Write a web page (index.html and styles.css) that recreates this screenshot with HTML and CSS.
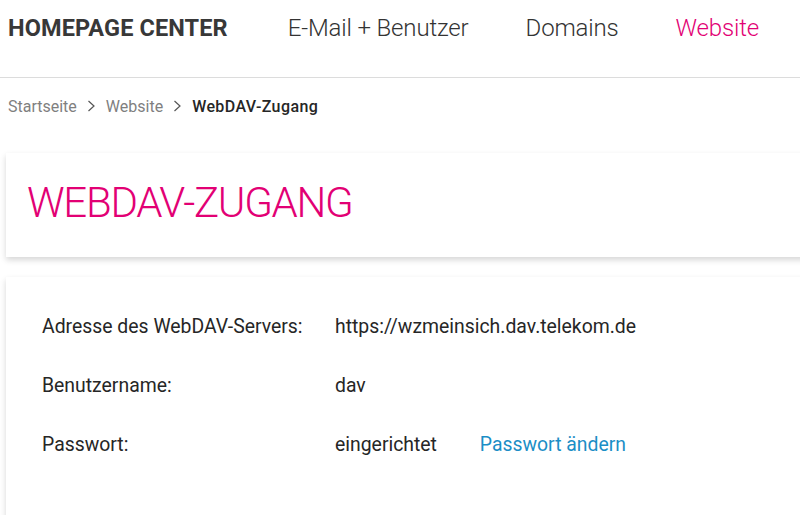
FILE: index.html
```html
<!DOCTYPE html>
<html lang="de">
<head>
<meta charset="utf-8">
<title>WebDAV-Zugang</title>
<link rel="stylesheet" href="styles.css">
</head>
<body>
<header class="topbar">
  <div class="brand">HOMEPAGE CENTER</div>
  <nav class="mainnav">
    <a class="navlink" href="#">E-Mail + Benutzer</a>
    <a class="navlink" href="#">Domains</a>
    <a class="navlink active" href="#">Website</a>
  </nav>
</header>
<div class="breadcrumb">
  <a class="crumb" href="#">Startseite</a>
  <span class="sep"><svg width="9" height="12" viewBox="0 0 9 12"><path d="M1.5 1 L7 6 L1.5 11" fill="none" stroke="#555" stroke-width="1.2"/></svg></span>
  <a class="crumb" href="#">Website</a>
  <span class="sep"><svg width="9" height="12" viewBox="0 0 9 12"><path d="M1.5 1 L7 6 L1.5 11" fill="none" stroke="#555" stroke-width="1.2"/></svg></span>
  <span class="crumb current">WebDAV-Zugang</span>
</div>
<main class="content">
  <section class="card titlecard">
    <h1 class="title">WEBDAV-ZUGANG</h1>
  </section>
  <section class="card infocard">
    <div class="row">
      <div class="label">Adresse des WebDAV-Servers:</div>
      <div class="value">https://wzmeinsich.dav.telekom.de</div>
    </div>
    <div class="row">
      <div class="label">Benutzername:</div>
      <div class="value">dav</div>
    </div>
    <div class="row">
      <div class="label">Passwort:</div>
      <div class="value">eingerichtet <a class="link" href="#">Passwort ändern</a></div>
    </div>
  </section>
</main>
</body>
</html>
```

FILE: styles.css
```css
html, body {
  margin: 0;
  padding: 0;
  overflow: hidden;
  background: #fff;
}
body {
  font-family: Roboto, "Liberation Sans", sans-serif;
  color: #262626;
  width: 800px;
}
a { text-decoration: none; }

.topbar {
  display: flex;
  align-items: center;
  height: 78px;
  border-bottom: 1px solid #dcdcdc;
  padding-left: 8px;
  box-sizing: border-box;
  white-space: nowrap;
}
.brand {
  font-weight: 700;
  font-size: 23.5px;
  letter-spacing: 0.1px;
  color: #383838;
  margin-top: -22px;
  flex: none;
}
.mainnav {
  display: flex;
  gap: 57px;
  margin-left: 60px;
  margin-top: -22px;
  flex: none;
}
.navlink {
  font-size: 24px;
  font-weight: 300;
  color: #333;
  letter-spacing: -0.15px;
}
.navlink.active { color: #e20074; }

.breadcrumb {
  display: flex;
  align-items: center;
  padding: 17px 8px 0;
  height: 22px;
  font-size: 16px;
  white-space: nowrap;
}
.crumb { color: #7f7f7f; }
.crumb.current { color: #262626; font-weight: 500; letter-spacing: 0.4px; }
.sep { display: flex; margin: 0 10px; }

.content {
  padding: 36px 0 0 6px;
  width: 830px;
}
.card {
  background: #fff;
  box-shadow: 0 3px 6px rgba(0,0,0,0.16);
}
.titlecard {
  height: 104px;
  box-sizing: border-box;
  display: flex;
  align-items: center;
  padding: 0 0 5px 21px;
}
.title {
  margin: 0;
  font-size: 42px;
  font-weight: 300;
  color: #e20074;
  letter-spacing: -1.3px;
}
.infocard {
  margin-top: 20px;
  padding: 38px 0 40px 36px;
  min-height: 260px;
  box-sizing: border-box;
}
.row {
  display: flex;
  height: 59px;
  font-size: 19.4px;
  white-space: nowrap;
}
.label { width: 293px; flex: none; }
.link { color: #1b8ec6; margin-left: 38px; }
```
